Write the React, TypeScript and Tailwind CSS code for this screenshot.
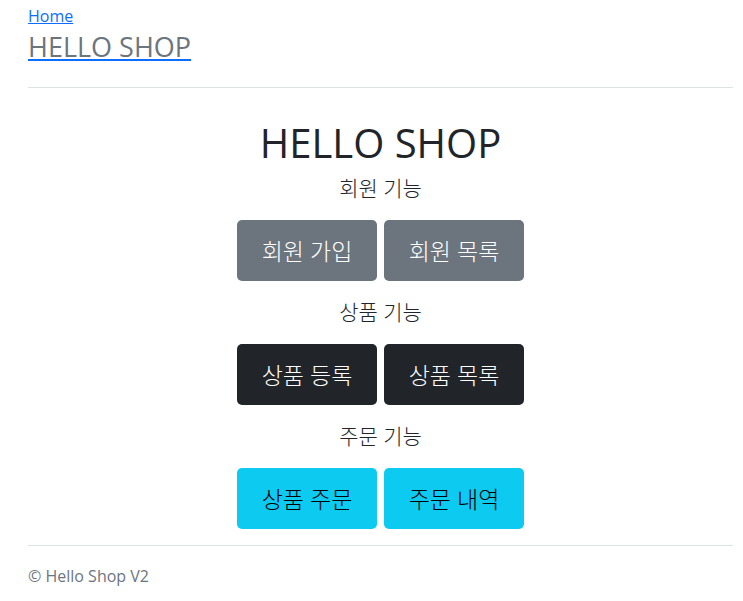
const menus = [
  {
    title: "회원 기능",
    tone: "bg-[#6c757d] text-white",
    items: ["회원 가입", "회원 목록"],
  },
  {
    title: "상품 기능",
    tone: "bg-[#212529] text-white",
    items: ["상품 등록", "상품 목록"],
  },
  {
    title: "주문 기능",
    tone: "bg-[#0dcaf0] text-black",
    items: ["상품 주문", "주문 내역"],
  },
];

export default function App() {
  return (
    <div
      className="min-h-screen bg-white pl-[28px] pr-[10px] pt-[4px] text-[#212529]"
      style={{ fontFamily: '"Open Sans", "Noto Sans CJK KR", sans-serif' }}
    >
      {/* header */}
      <div className="border-b border-[#dee2e6] pb-[24px]">
        <a href="#" className="block text-[16px] leading-[24px] text-[#0d6efd] underline w-fit">
          Home
        </a>
        <a href="#" className="mt-[3px] block w-fit text-[#0d6efd] underline decoration-[#0d6efd]">
          <h3 className="text-[27px] leading-[1.2] text-[#6c757d]">HELLO SHOP</h3>
        </a>
      </div>

      {/* main */}
      <div className="flex flex-col items-center pt-[31px]">
        <h1 className="text-[40px] leading-[48px]">HELLO SHOP</h1>
        {menus.map((menu, i) => (
          <div key={menu.title} className={`flex flex-col items-center ${i === 0 ? "mt-[6px]" : "mt-[16px]"}`}>
            <p className="text-[21px] font-light leading-[30px]">{menu.title}</p>
            <div className="mt-[17px] flex gap-[7px]">
              {menu.items.map((item) => (
                <button
                  key={item}
                  className={`h-[61px] w-[140px] rounded-[5px] text-[23px] font-light ${menu.tone}`}
                >
                  {item}
                </button>
              ))}
            </div>
          </div>
        ))}
      </div>

      {/* footer */}
      <div className="mt-[16px] border-t border-[#dee2e6] pt-[18px]">
        <p className="text-[16px] leading-[24px] text-[#6c757d]">© Hello Shop V2</p>
      </div>
    </div>
  );
}
